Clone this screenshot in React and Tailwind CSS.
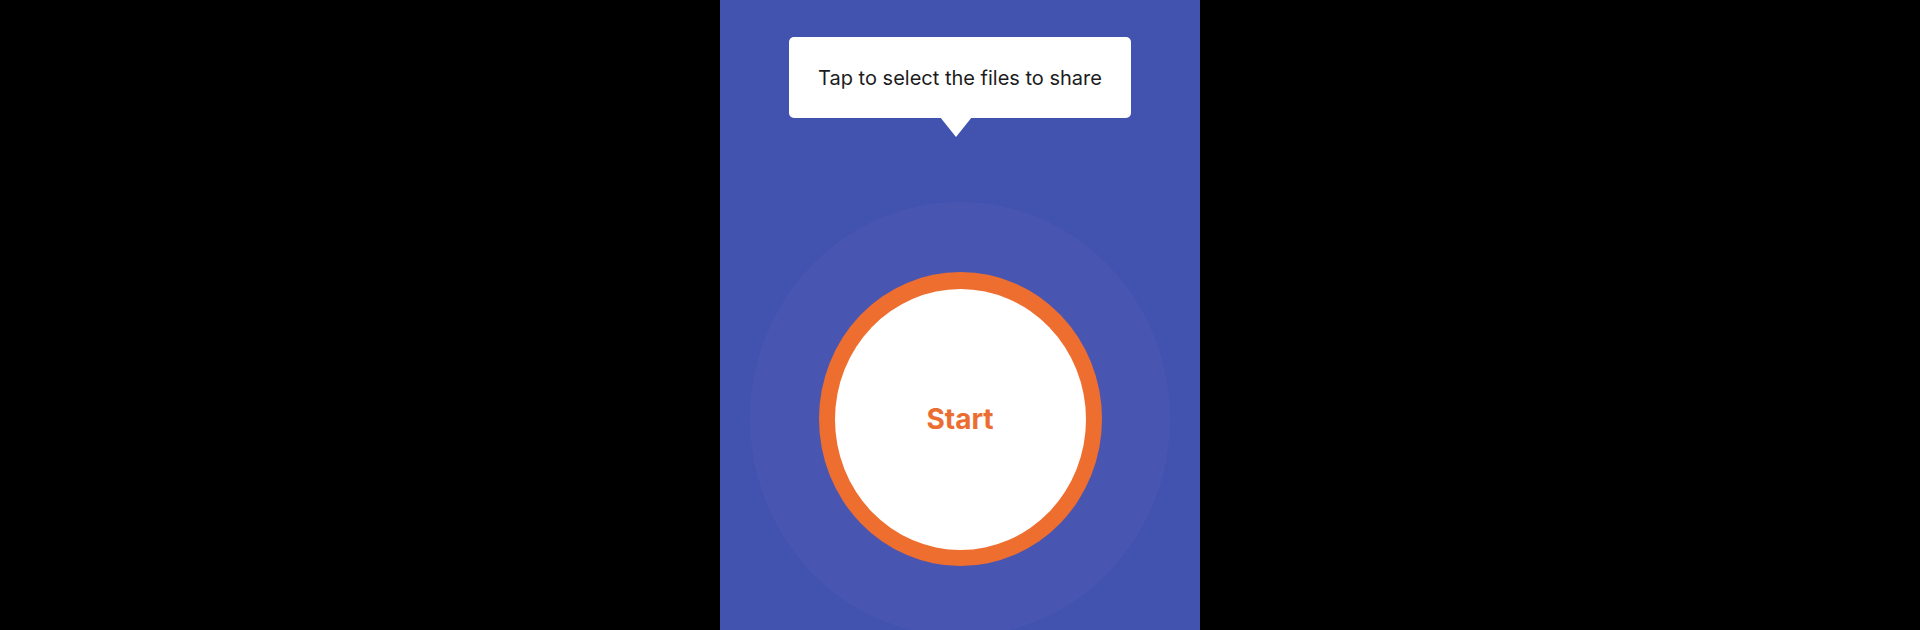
import React from 'react';

export default function App() {
  return (
    <div className="w-[1920px] h-[630px] bg-black flex justify-center overflow-hidden">
      <div className="w-[480px] h-[630px] bg-[#4252af] flex flex-col items-center overflow-hidden">
        {/* Hint bubble */}
        <div className="relative mt-[37px] w-[342px] h-[81px] shrink-0 bg-white rounded-[5px] flex items-center justify-center">
          <span className="text-[20px] text-[#1c1c1e]" style={{ fontFamily: 'Inter, "Liberation Sans", sans-serif' }}>
            Tap to select the files to share
          </span>
          <div className="absolute left-[151px] top-[80px] w-0 h-0 border-l-[16px] border-r-[16px] border-t-[20px] border-l-transparent border-r-transparent border-t-white" />
        </div>

        {/* Start button */}
        <div className="mt-[84px] w-[420px] h-[434px] shrink-0 rounded-[50%] bg-[#4956b1] flex items-center justify-center">
          <button className="w-[283px] h-[294px] rounded-[50%] bg-[#ee6e30] flex items-center justify-center">
            <span className="w-[251px] h-[261px] rounded-[50%] bg-white flex items-center justify-center">
              <span className="text-[28px] font-bold text-[#ec6d31]" style={{ fontFamily: 'Inter, "Liberation Sans", sans-serif' }}>
                Start
              </span>
            </span>
          </button>
        </div>
      </div>
    </div>
  );
}
